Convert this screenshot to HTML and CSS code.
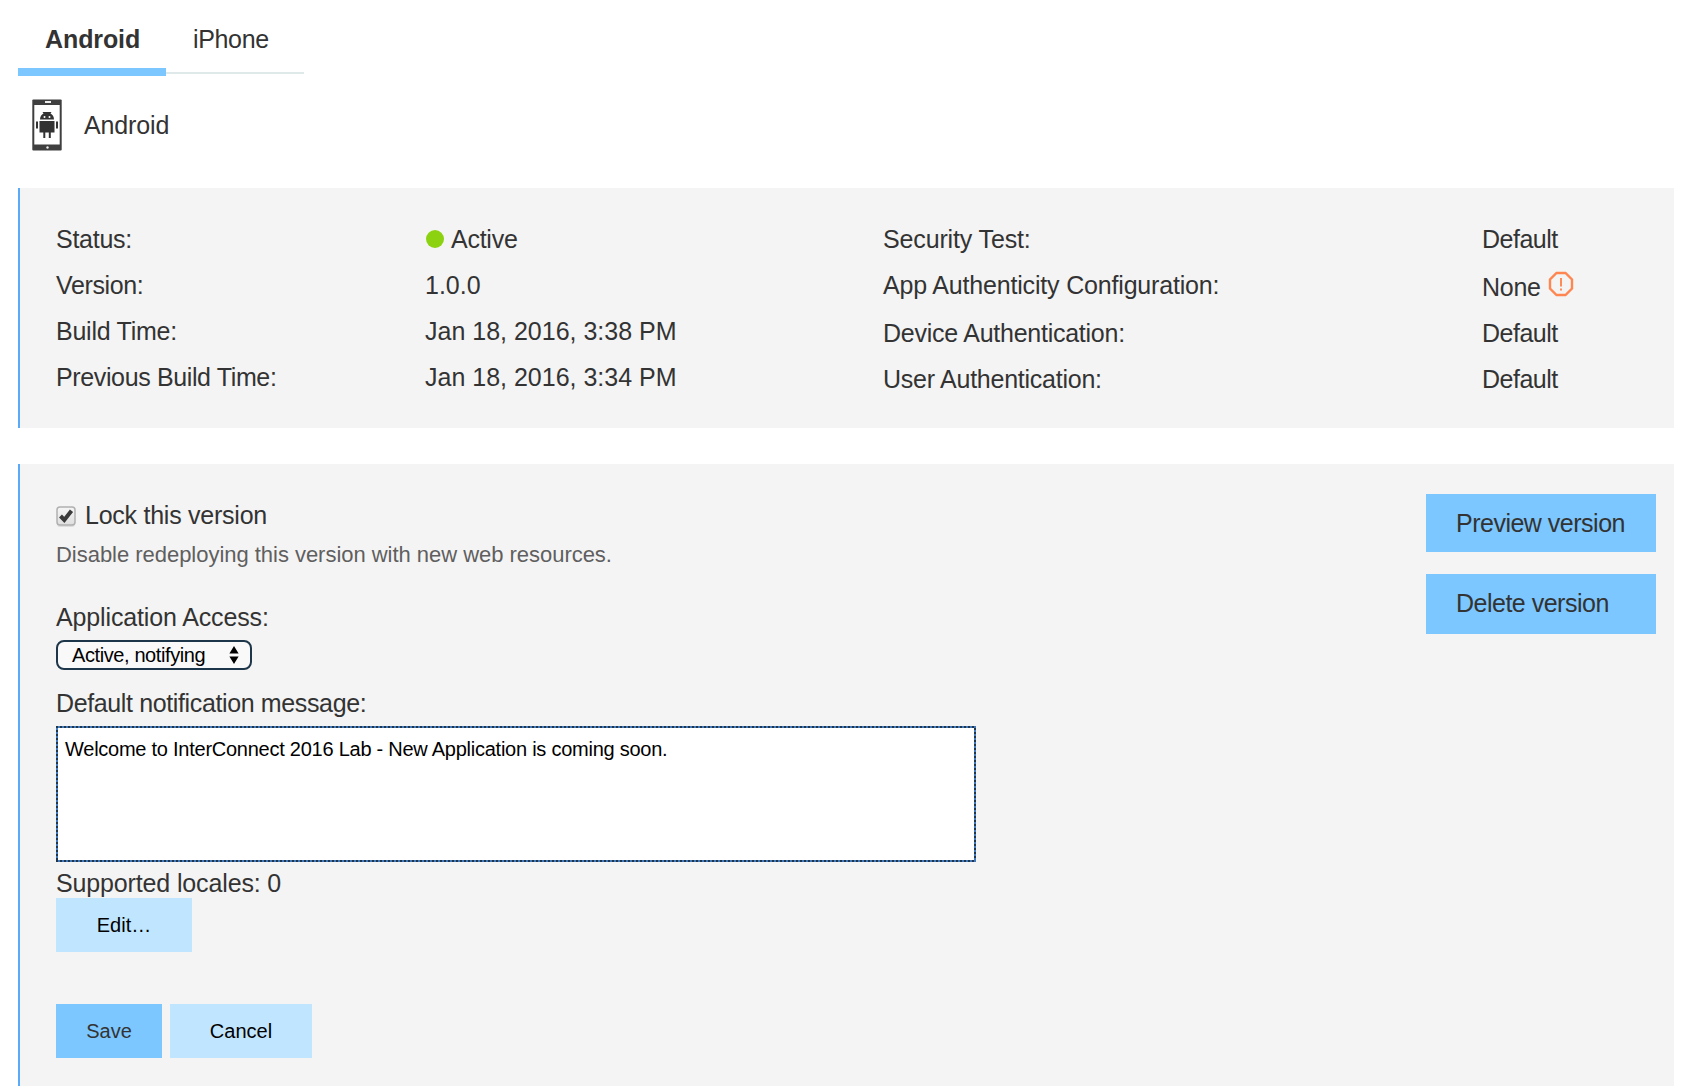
FILE: index.html
```html
<!DOCTYPE html>
<html lang="en">
<head>
<meta charset="utf-8">
<title>Android</title>
<link rel="stylesheet" href="styles.css">
</head>
<body>
<nav class="tabs">
  <a class="tab tab-active">Android</a>
  <a class="tab">iPhone</a>
</nav>
<header class="platform">
  <svg class="phone" width="30" height="52" viewBox="0 0 30 52">
    <rect x=".3" y=".5" width="29.400" height="51" rx="1" fill="#3f3f3f"/>
    <rect x="2.300" y="6" width="25.400" height="39.500" fill="#fff"/>
    <rect x="13" y="2" width="6" height="2" fill="#eee"/>
    <circle cx="15.500" cy="48.500" r="1.200" fill="#eee"/>
    <path d="M8 20.500c0-3 1.500-5 3.500-6l-1-1.500h9l-1 1.500c2 1 3.500 3 3.500 6zM7.500 22h15v11.500h-15zM4 22.500h2v7H4zM24 22.500h2v7h-2zM11.300 33h2v6h-2zM16.800 33h2v6h-2z" fill="#333"/>
    <circle cx="12.500" cy="18" r="1" fill="#fff"/><circle cx="17.500" cy="18" r="1" fill="#fff"/>
  </svg>
  <span>Android</span>
</header>
<section class="panel summary">
  <dl class="facts facts-build">
    <dt>Status:</dt><dd><i class="dot"></i>Active</dd>
    <dt class="snug">Version:</dt><dd class="number">1.0.0</dd>
    <dt>Build Time:</dt><dd class="number">Jan 18, 2016, 3:38 PM</dd>
    <dt class="snug">Previous Build Time:</dt><dd class="number">Jan 18, 2016, 3:34 PM</dd>
  </dl>
  <dl class="facts facts-security">
    <dt class="loose">Security Test:</dt><dd class="tight">Default</dd>
    <dt class="config">App Authenticity Configuration:</dt>
    <dd class="none">None
      <svg class="warning" width="26" height="26" viewBox="0 0 26 26" fill="none" stroke="#ff8650" stroke-width="2.400">
        <path d="M8.500 2h9L24 8.500v9L17.500 24h-9L2 17.500v-9z"/><path d="M13 7v8.500M13 17.500v2" stroke-width="1.900"/>
      </svg>
    </dd>
    <dt>Device Authentication:</dt><dd class="tight">Default</dd>
    <dt>User Authentication:</dt><dd class="tight">Default</dd>
  </dl>
</section>
<section class="panel settings">
  <form class="form">
    <label class="lock">
      <svg class="check" width="20" height="22" viewBox="0 0 20 22">
        <defs><linearGradient id="g" x2="0" y2="1"><stop stop-color="#f6f6f6"/><stop offset="1" stop-color="#dedede"/></linearGradient></defs>
        <rect x="1" y="2" width="18" height="19" rx="3" fill="#ddd"/>
        <rect x="1" y="1" width="18" height="18" rx="3" fill="url(#g)" stroke="#b0b0b0" stroke-width="1.500"/>
        <path d="M4.500 10l3.800 4L15.500 4.800" fill="none" stroke="#3a3a3a" stroke-width="4"/>
      </svg>
      <span>Lock this version</span>
    </label>
    <p class="hint">Disable redeploying this version with new web resources.</p>
    <p class="label access loose">Application Access:</p>
    <div class="select"><span>Active, notifying</span>
      <svg width="10" height="18" viewBox="0 0 10 18"><path d="M5 0l4.600 7.500H.4zM5 18l4.600-7.500H.4z"/></svg>
    </div>
    <p class="label message-label snug">Default notification message:</p>
    <div class="message">Welcome to InterConnect 2016 Lab - New Application is coming soon.</div>
    <p class="label locales loose">Supported locales: 0</p>
    <div class="button edit">Edit…</div>
    <div class="actions">
      <div class="button save">Save</div>
      <div class="button cancel">Cancel</div>
    </div>
  </form>
  <aside class="side">
    <div class="side-button preview tight">Preview version</div>
    <div class="side-button delete tight">Delete version</div>
  </aside>
</section>
</body>
</html>
```
FILE: styles.css
```css
* { box-sizing: border-box; }
html, body { height: 100%; }
body {
  margin: 0;
  padding: 0 18px;
  display: flex;
  flex-direction: column;
  overflow: hidden;
  background: #fff;
  color: #333;
  font-family: "Liberation Sans", Arial, sans-serif;
  font-size: 25px;
  letter-spacing: -0.25px;
  white-space: nowrap;
}
p, dl, dd { margin: 0; }
.loose { letter-spacing: -0.14px; }
.config { letter-spacing: -0.18px; }
.snug { letter-spacing: -0.37px; }
.tight { letter-spacing: -0.5px; }
.number { letter-spacing: 0; }

.tabs { display: flex; height: 76px; align-items: flex-start; flex: none; }
.tab { height: 74px; width: 138px; padding-left: 27px; line-height: 78px; border-bottom: 2px solid #dfe9e9; letter-spacing: -0.35px; }
.tab-active { height: 76px; width: 148px; font-weight: bold; letter-spacing: -0.1px; border-bottom: 8px solid #7cc7ff; }

.platform { display: flex; flex: none; height: 112px; padding: 23px 0 0 14px; gap: 22px; }
.platform span { line-height: 52px; letter-spacing: -0.13px; }

.panel { background: #f4f4f4; border-left: 2px solid #5aaafa; display: flex; }
.summary { height: 240px; flex: none; padding: 28px 0 0 36px; }
.facts { display: grid; grid-auto-rows: 46px; line-height: 47px; align-content: start; }
.facts-build { grid-template-columns: 369px 458px; }
.facts-security { grid-template-columns: 599px 150px; grid-template-rows: 46px 48px; }
.dot { display: inline-block; width: 18px; height: 18px; margin: 0 7px 0 1px; border-radius: 50%; background: #8cd211; vertical-align: 0; }
.none { display: flex; gap: 7px; line-height: 51px; }
.warning { margin-top: 9px; }

.settings { flex: 1; margin-top: 36px; padding: 0 18px 0 36px; justify-content: space-between; }
.form { width: 920px; display: flex; flex-direction: column; align-items: flex-start; }
.lock { display: flex; gap: 9px; margin-top: 37px; height: 30px; line-height: 28px; }
.check { margin-top: 5px; }
.hint { margin-top: 11px; height: 25px; font-size: 22px; letter-spacing: -0.03px; line-height: 26px; color: #5f5f5f; }
.label { height: 30px; line-height: 28px; }
.access { margin-top: 36px; }
.select { display: flex; justify-content: space-between; align-items: center; margin-top: 7px; width: 196px; height: 30px; padding: 0 11px 0 14px; border: 2px solid #1d3649; border-radius: 8px; background: #f9f9f9; color: #000; font-size: 20px; letter-spacing: -0.4px; }
.message-label { margin-top: 19px; }
.message { position: relative; width: 920px; height: 136px; margin-top: 7px; padding: 9px 7px; border: 2px solid #4178be; background: #fff; color: #000; font-size: 20px; line-height: 24px; }
.message::after {
  content: "";
  position: absolute;
  inset: -2px;
  background:
    repeating-linear-gradient(90deg, #1d3649 0 2px, #4178be 2px 4px) top / 100% 2px no-repeat,
    repeating-linear-gradient(90deg, #1d3649 0 2px, #4178be 2px 4px) bottom / 100% 2px no-repeat,
    repeating-linear-gradient(#1d3649 0 2px, #4178be 2px 4px) left / 2px 100% no-repeat,
    repeating-linear-gradient(#4178be 0 2px, #1d3649 2px 4px) right / 2px 100% no-repeat;
}
.locales { margin-top: 7px; height: 29px; }
.button { height: 54px; line-height: 55px; text-align: center; font-size: 20px; letter-spacing: 0; color: #000; background: #c0e6ff; }
.edit { width: 136px; }
.save { width: 106px; background: #7cc7ff; color: #333; }
.cancel { width: 142px; }
.actions { display: flex; gap: 8px; margin-top: 52px; }
.side { width: 230px; padding-top: 30px; }
.side-button { height: 58px; padding-left: 30px; line-height: 58px; background: #7cc7ff; }
.delete { height: 60px; margin-top: 22px; }
```
